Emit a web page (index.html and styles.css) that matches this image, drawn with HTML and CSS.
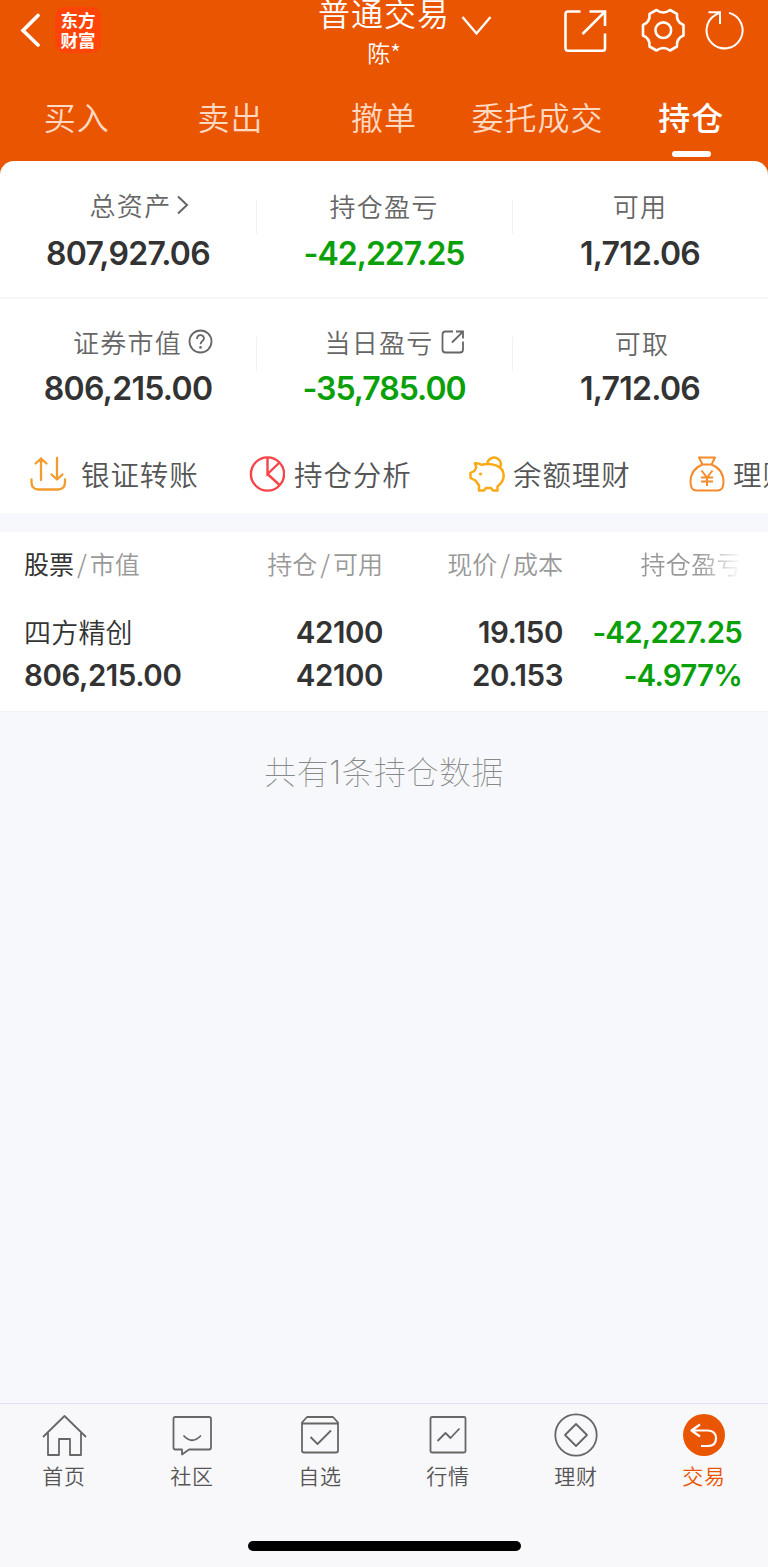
FILE: index.html
```html
<!DOCTYPE html>
<html lang="zh-CN">
<head>
<meta charset="UTF-8">
<meta name="viewport" content="width=device-width, initial-scale=1.0">
<title>普通交易</title>
<link rel="stylesheet" href="styles.css">
</head>
<body>
<div class="app">
    <header class="header">
        <div class="topbar">
            <div class="top_left">
                <svg class="back" width="22" height="36" viewBox="0 0 22 36"><path d="M19 2.500L4 17.500L19 32" fill="none" stroke="#fff" stroke-width="3.600" stroke-linecap="round" stroke-linejoin="miter"/></svg>
                <div class="logo"><span>东方</span><span>财富</span></div>
            </div>
            <div class="top_title">
                <div class="title">普通交易</div>
                <div class="account">陈*</div>
            </div>
            <svg class="arrow_down" width="32" height="22" viewBox="0 0 32 22"><path d="M1.500 2L15.500 18.500L29.500 2" fill="none" stroke="#fff" stroke-width="2.400"/></svg>
            <div class="top_right">
                <svg width="44" height="44" viewBox="0 0 44 44" fill="none" stroke="#fff" stroke-width="2.600"><path d="M16.500 2.500H4Q1.500 2.500 1.500 5V39Q1.500 41.800 4 41.800H38.500Q41 41.800 41 39.500V24.500M25.500 2.500H41V17M40.700 2.800L18.500 25"/></svg>
                <svg class="gear" width="46" height="46" viewBox="0 0 46 46" fill="none" stroke="#fff" stroke-width="2.600" stroke-linejoin="round"><circle cx="23.300" cy="23.200" r="7.800"/><path d="M16.500 3Q23.300 8 30 3L37 6.800Q36 15 43.500 18V28.500Q36 31.500 37 39.500L30 43.500Q23.300 38.500 16.500 43.500L9.500 39.500Q10.500 31.500 3 28.500V18Q10.500 15 9.500 6.800Z"/></svg>
                <svg class="refresh" width="40" height="42" viewBox="0 0 40 42" fill="none" stroke="#fff" stroke-width="2"><path d="M24 3.900A18 18 0 1 1 10.500 5.800L15 3.500"/><path d="M3.500 3.300H15V15"/></svg>
            </div>
        </div>
        <nav class="tabs">
            <a>买入</a>
            <a>卖出</a>
            <a>撤单</a>
            <a>委托成交</a>
            <a class="active">持仓</a>
        </nav>
    </header>

    <section class="assets">
        <div class="asset_row">
            <div class="asset">
                <div class="label up total_assets">总资产<svg class="chev" width="14" height="22" viewBox="0 0 14 22"><path d="M2 2.500L11 11L2 19.500" fill="none" stroke="#666" stroke-width="2"/></svg></div>
                <div class="num">807,927.06</div>
            </div>
            <div class="asset">
                <div class="label">持仓盈亏</div>
                <div class="num green">-42,227.25</div>
            </div>
            <div class="asset">
                <div class="label">可用</div>
                <div class="num">1,712.06</div>
            </div>
        </div>
        <div class="asset_row second">
            <div class="asset">
                <div class="label up market_value">证券市值<svg class="help" width="25" height="25" viewBox="0 0 25 25" fill="none" stroke="#666" stroke-width="1.800"><circle cx="12.500" cy="12.500" r="11"/><path d="M9 10C9 5 16 5 16 9.500C16 12 12.500 12 12.500 15.300" /><circle cx="12.500" cy="18.400" r="1.300" fill="#666" stroke="none"/></svg></div>
                <div class="num">806,215.00</div>
            </div>
            <div class="asset">
                <div class="label up today_profit">当日盈亏<svg class="share" width="24" height="24" viewBox="0 0 24 24" fill="none" stroke="#666" stroke-width="1.800"><path d="M12 1.500H4.500Q1.500 1.500 1.500 4.500V19.500Q1.500 22.500 4.500 22.500H19Q22 22.500 22 19.500V11.500M15 1.500H22V8.500M21.700 1.800L11 12.500"/></svg></div>
                <div class="num green">-35,785.00</div>
            </div>
            <div class="asset">
                <div class="label available">可取</div>
                <div class="num">1,712.06</div>
            </div>
        </div>
        <div class="shortcuts">
            <a class="transfer"><svg width="38" height="36" viewBox="0 0 38 36" fill="none" stroke="#f29b2e" stroke-width="2.300" stroke-linecap="round" stroke-linejoin="round"><path d="M2.500 23.500V26Q2.500 33.500 9.500 33.500H29Q36 33.500 36 26V23.500M12 24V2.500M6.500 7.500L12 2.500L17.500 7.500M28 2V23.500M22.500 18.500L28 23.500L33.500 18.500"/></svg>银证转账</a>
            <a class="analysis"><svg width="36" height="36" viewBox="0 0 36 36" fill="none" stroke="#f74448" stroke-width="2.400"><circle cx="18.500" cy="18" r="16.600"/><path d="M18.500 1.500V18L30 7M18.500 18L30.500 29"/></svg>持仓分析</a>
            <a class="balance"><svg width="36" height="36" viewBox="0 0 36 36" fill="none" stroke="#fba914" stroke-width="2.500" stroke-linejoin="round"><path d="M12.500 8.800C9.500 7 6 7.300 6 7.300L7.300 11.500L5.300 15L1.500 17V22L6.500 24.500L10 29.500V34.500H15L17 32H22L24 34.500H28.500V30.500C33 27 34.700 22 34.700 19C34.200 9.500 22 6.300 12.500 8.800ZM18 8C19.500 1.500 25 .5 28.500 2.500C32.500 5 32.800 9.500 30.500 11.500"/><circle cx="11.500" cy="18" r="1.600" fill="#fba914" stroke="none"/></svg>余额理财</a>
            <a class="wealth"><svg width="36" height="36" viewBox="0 0 36 36" fill="none" stroke="#f48b2c" stroke-width="2" stroke-linejoin="round"><path d="M10 1.500H26L22.500 8.500H13.500ZM13.500 8.500C5 12 1.500 19 1.500 26Q1.500 34.500 7.500 34.500H28.500Q34.500 34.500 34.500 26C34.500 19 31 12 22.500 8.500M12.500 14.500L18 21.500L23.500 14.500M18 21.500V30M12 21.500H24M12 25.500H24"/></svg>理财</a>
        </div>
    </section>

    <section class="positions">
        <div class="thead">
            <div><b>股票</b><i>/</i>市值</div>
            <div>持仓<i>/</i>可用</div>
            <div>现价<i>/</i>成本</div>
            <div class="fade">持仓盈亏</div>
        </div>
        <div class="trow">
            <div><span class="stock">四方精创</span><span>806,215.00</span></div>
            <div><span>42100</span><span>42100</span></div>
            <div><span>19.150</span><span>20.153</span></div>
            <div class="green"><span>-42,227.25</span><span>-4.977%</span></div>
        </div>
    </section>
    <p class="total">共有<span>1</span>条持仓数据</p>

    <footer class="footer">
        <nav class="menu">
            <a><svg width="46" height="46" viewBox="0 0 46 46"><path d="M2 24L23.500 3L45 24M7 20V42H18V26H29V42H40V20"/></svg>首页</a>
            <a><svg width="46" height="46" viewBox="0 0 46 46"><path d="M6 4H40Q42 4 42 6V34.500Q42 36.500 40 36.500H20L13 41.500V36.500H6Q4.500 36.500 4.500 34.500V6Q4.500 4 6 4ZM14.500 22.500Q23 32 32 22.500"/></svg>社区</a>
            <a><svg width="46" height="46" viewBox="0 0 46 46"><path d="M10 4H36L41 9.500V37.500Q41 39.500 39 39.500H7Q5 39.500 5 37.500V9.500ZM5 10.500H41M13.500 24L20.500 31L34 17.500"/></svg>自选</a>
            <a><svg width="46" height="46" viewBox="0 0 46 46"><rect x="5.500" y="4" width="35" height="35.500" rx="1.500"/><path d="M12.500 28L20.500 20L25.500 25L34.500 15.500"/></svg>行情</a>
            <a><svg width="46" height="46" viewBox="0 0 46 46"><circle cx="23" cy="22" r="20.700"/><path d="M23 11L34 22L23 33L12 22Z"/></svg>理财</a>
            <a class="active"><svg width="46" height="46" viewBox="0 0 46 46"><circle cx="23" cy="22" r="21"/><path d="M19 11.500L10.500 17.500L19 23.500M10.500 17.500H27Q35 18 35 25.500T27 33H20"/></svg>交易</a>
        </nav>
        <div class="home_bar"></div>
    </footer>
</div>
</body>
</html>
```
FILE: styles.css
```css
*{
    box-sizing: border-box;
}
body{
    margin: 0;
    font-family: "Noto Sans CJK SC", sans-serif;
    font-weight: 350;
    color: #333;
}
svg{
    display: block;
    flex: none;
}
.app{
    display: flex;
    flex-direction: column;
    width: 768px;
    height: 1567px;
    overflow: hidden;
    background: #f7f8fb;
}
.green{
    color: #09a009;
}

/* header */
.header{
    height: 175px;
    flex: none;
    background: #ea5502;
    color: #fff;
}
.topbar{
    display: grid;
    grid-template-columns: 317px 134px 113px 204px;
    height: 82px;
}
.top_left{
    display: flex;
    align-items: flex-start;
    padding: 7px 0 0 19px;
}
.back{
    margin-top: 6px;
}
.logo{
    display: flex;
    flex-direction: column;
    align-items: center;
    width: 46px;
    height: 46px;
    margin-left: 14px;
    padding-top: 3px;
    border-radius: 10px;
    background: #ff4407;
    font-size: 17.5px;
    line-height: 19.5px;
    font-weight: 700;
}
.top_title{
    text-align: center;
}
.title{
    height: 38px;
    margin-top: -7px;
    font-size: 32px;
    line-height: 38px;
    letter-spacing: 1px;
    white-space: nowrap;
}
.account{
    margin-top: 5px;
    font-size: 23px;
    line-height: 32px;
}
.arrow_down{
    margin: 15px 0 0 10px;
}
.top_right{
    display: flex;
    align-items: flex-start;
    padding-top: 9px;
}
.gear{
    margin: -2px 0 0 32px;
}
.refresh{
    margin-left: 19px;
}
.tabs{
    display: grid;
    grid-template-columns: repeat(5, 1fr);
    font-size: 32px;
    line-height: 44px;
    letter-spacing: 1px;
    text-align: center;
    padding-top: 12px;
    color: #ffd9c2;
}
.tabs .active{
    display: flex;
    flex-direction: column;
    align-items: center;
    color: #fff;
    font-weight: 500;
}
.tabs .active::after{
    content: "";
    width: 39px;
    height: 6px;
    margin-top: 13px;
    border-radius: 3px;
    background: #fff;
}

/* assets */
.assets{
    height: 352px;
    margin-top: -14px;
    flex: none;
    background: #fff;
    border-radius: 14px 14px 0 0;
    overflow: hidden;
}
.asset_row{
    display: grid;
    grid-template-columns: repeat(3, 1fr);
    height: 138px;
    padding-top: 25px;
    border-bottom: 2px solid #f7f7f7;
}
.asset_row.second{
    height: 130px;
    padding-top: 24px;
    border-bottom: 0;
}
.asset{
    text-align: center;
}
.asset + .asset{
    background: linear-gradient(#f1f1f1, #f1f1f1) no-repeat 0 14px / 1px 34px;
}
.label{
    display: flex;
    justify-content: center;
    align-items: center;
    height: 40px;
    font-size: 26px;
    letter-spacing: 1.3px;
    line-height: 40px;
    color: #666;
}
.label.up{
    padding-bottom: 3px;
}
.total_assets{
    padding-left: 24px;
}
.market_value{
    padding-left: 30px;
}
.today_profit{
    padding-left: 21px;
}
.available{
    padding-left: 4px;
}
.chev{
    margin-left: 5px;
}
.help{
    margin-left: 6px;
}
.share{
    margin-left: 7px;
}
.num{
    font-family: Inter, sans-serif;
    font-size: 32px;
    line-height: 40px;
    font-weight: 600;
    letter-spacing: -.7px;
    margin-top: 8px;
}
.num.green{
    letter-spacing: -1px;
}
.second .num{
    margin-top: 6px;
}
.shortcuts{
    display: flex;
    height: 84px;
    padding: 5px 0 0 29px;
    font-size: 28.5px;
    line-height: 79px;
    letter-spacing: .9px;
    white-space: nowrap;
    color: #555;
}
.shortcuts a{
    display: flex;
    align-items: center;
    flex: none;
    gap: 9px;
    width: 220px;
}
.shortcuts .transfer{
    gap: 14px;
}
.shortcuts .balance, .shortcuts .wealth{
    gap: 8px;
}

/* positions */
.positions{
    height: 180px;
    margin-top: 19px;
    flex: none;
    background: #fff;
    border-bottom: 1px solid #f3f3f5;
}
.thead, .trow{
    display: grid;
    grid-template-columns: 179px 180px 180px 179px;
    padding: 0 26px 0 24px;
    text-align: right;
}
.thead{
    font-size: 25px;
    line-height: 62px;
    height: 79px;
    color: #999;
    white-space: nowrap;
}
.thead b{
    font-weight: 400;
    color: #333;
}
.thead i{
    font-style: normal;
    padding: 0 3px;
}
.thead .fade{
    letter-spacing: .4px;
    -webkit-mask-image: linear-gradient(to right, #000 76%, transparent);
    mask-image: linear-gradient(to right, #000 76%, transparent);
}
.trow{
    font-family: Inter, "Noto Sans CJK SC", sans-serif;
    font-size: 29.5px;
    line-height: 43px;
    font-weight: 600;
    letter-spacing: -.45px;
}
.trow .green{
    letter-spacing: -.8px;
}
.trow span{
    display: block;
    height: 43px;
}
.trow .stock{
    font-family: "Noto Sans CJK SC", sans-serif;
    font-size: 27px;
    line-height: 41px;
    font-weight: 350;
    letter-spacing: .2px;
}
.thead div:first-child, .trow div:first-child{
    text-align: left;
}
.total{
    margin: 34px 0 0;
    text-align: center;
    font-size: 32px;
    line-height: 48px;
    letter-spacing: .4px;
    font-weight: 100;
    color: #888;
}
.total span{
    font-family: Inter, sans-serif;
    font-weight: 200;
}

/* bottom menu */
.footer{
    display: flex;
    flex-direction: column;
    align-items: center;
    height: 164px;
    margin-top: auto;
    border-top: 1px solid #e2e0e8;
    background: #f8f8fb;
}
.menu{
    display: grid;
    grid-template-columns: repeat(6, 1fr);
    width: 100%;
    padding-top: 9px;
}
.menu a{
    display: flex;
    flex-direction: column;
    align-items: center;
    font-size: 21px;
    line-height: 32px;
    letter-spacing: .7px;
    color: #555;
}
.menu svg{
    fill: none;
    stroke: #666;
    stroke-width: 1.8;
    stroke-linejoin: round;
}
.menu .active{
    color: #ea5502;
}
.menu .active circle{
    fill: #ea5502;
    stroke: none;
}
.menu .active path{
    stroke: #fff;
    stroke-width: 2.2;
}
.home_bar{
    width: 273px;
    height: 10px;
    margin-top: 50px;
    border-radius: 5px;
    background: #000;
}
```
